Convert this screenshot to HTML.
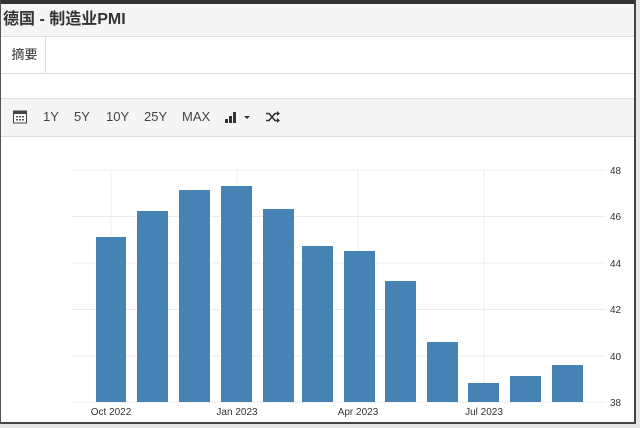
<!DOCTYPE html>
<html><head><meta charset="utf-8"><style>
body{margin:0;width:640px;height:428px;overflow:hidden;background:#e6e6e6;font-family:"Liberation Sans","Noto Sans CJK SC",sans-serif;position:relative}
#win{position:absolute;left:0;top:0;width:633px;height:418px;background:#fff;border-top:4px solid #333;border-right:2px solid #444;border-bottom:2px solid #444;border-left:1px solid #555;box-sizing:content-box}
#title{position:absolute;left:0;top:0;width:100%;height:33px;background:#f5f5f5;border-bottom:1px solid #ddd;font-weight:bold;font-size:16px;color:#333;line-height:31px;padding-left:2px;box-sizing:border-box}
#tabs{position:absolute;left:0;top:33px;width:100%;height:36px;border-bottom:1px solid #ddd}
#tab{position:absolute;left:3px;top:0;width:41px;height:36px;background:#fff;border-right:1px solid #ddd;font-size:13px;color:#333;text-align:center;line-height:36px}
#tb{position:absolute;left:0;top:94px;width:100%;height:37px;background:#f5f5f5;border-top:1px solid #ddd;border-bottom:1px solid #ddd;font-size:13px;color:#444}
#tb span{position:absolute;top:10px}
</style></head><body>
<div id="win">
<div id="title">德国 - 制造业PMI</div>
<div id="tabs"><div id="tab">摘要</div></div>
<div id="tb">
<svg style="position:absolute;left:12px;top:11px" width="14" height="14" viewBox="0 0 14 14"><rect x="0.5" y="1" width="13" height="12" fill="#fff" stroke="#444"/><rect x="0.5" y="1" width="13" height="3" fill="#444"/><g fill="#555"><rect x="3" y="6" width="2" height="1.5"/><rect x="6" y="6" width="2" height="1.5"/><rect x="9" y="6" width="2" height="1.5"/><rect x="3" y="9" width="2" height="1.5"/><rect x="6" y="9" width="2" height="1.5"/><rect x="9" y="9" width="2" height="1.5"/></g></svg>
<span style="left:42px">1Y</span><span style="left:73px">5Y</span><span style="left:105px">10Y</span><span style="left:143px">25Y</span><span style="left:181px">MAX</span>
<svg style="position:absolute;left:224px;top:12px" width="28" height="12" viewBox="0 0 28 12"><rect x="0" y="8" width="3" height="4" fill="#333"/><rect x="4" y="5" width="3" height="7" fill="#333"/><rect x="8" y="1" width="3" height="11" fill="#333"/><path d="M19 5h6l-3 3z" fill="#333"/></svg>
<svg style="position:absolute;left:265px;top:12px" width="14" height="12" viewBox="0 0 14 12"><path d="M0 2.5h3l6 7h3M0 9.5h3l6-7h3" fill="none" stroke="#333" stroke-width="1.6"/><path d="M11 0l3 2.5-3 2.5zM11 7l3 2.5-3 2.5z" fill="#333"/></svg>
</div>
</div>
<svg style="position:absolute;left:0;top:0" width="640" height="428">
<g stroke="#ececec" stroke-width="1">
<line x1="72" x2="606" y1="170" y2="170"/><line x1="72" x2="606" y1="216.5" y2="216.5"/><line x1="72" x2="606" y1="263" y2="263"/><line x1="72" x2="606" y1="309.5" y2="309.5"/><line x1="72" x2="606" y1="356" y2="356"/><line x1="72" x2="606" y1="402" y2="402"/>
<line x1="111" x2="111" y1="170" y2="402"/><line x1="237" x2="237" y1="170" y2="402"/><line x1="358" x2="358" y1="170" y2="402"/><line x1="484" x2="484" y1="170" y2="402"/>
</g>
<g fill="#4682b4">
<rect x="96" y="237" width="30" height="165"/>
<rect x="137" y="211" width="31" height="191"/>
<rect x="179" y="190" width="31" height="212"/>
<rect x="221" y="186" width="31" height="216"/>
<rect x="263" y="209" width="31" height="193"/>
<rect x="302" y="246" width="31" height="156"/>
<rect x="344" y="251" width="31" height="151"/>
<rect x="385" y="281" width="31" height="121"/>
<rect x="427" y="342" width="31" height="60"/>
<rect x="468" y="383" width="31" height="19"/>
<rect x="510" y="376" width="31" height="26"/>
<rect x="552" y="365" width="31" height="37"/>
</g>
<g font-family="Liberation Sans, sans-serif" font-size="10" fill="#333">
<text x="610" y="174">48</text><text x="610" y="220">46</text><text x="610" y="267">44</text><text x="610" y="313">42</text><text x="610" y="360">40</text><text x="610" y="406">38</text>
<text x="111" y="415" text-anchor="middle">Oct 2022</text><text x="237" y="415" text-anchor="middle">Jan 2023</text><text x="358" y="415" text-anchor="middle">Apr 2023</text><text x="484" y="415" text-anchor="middle">Jul 2023</text>
</g>
</svg>
</body></html>
